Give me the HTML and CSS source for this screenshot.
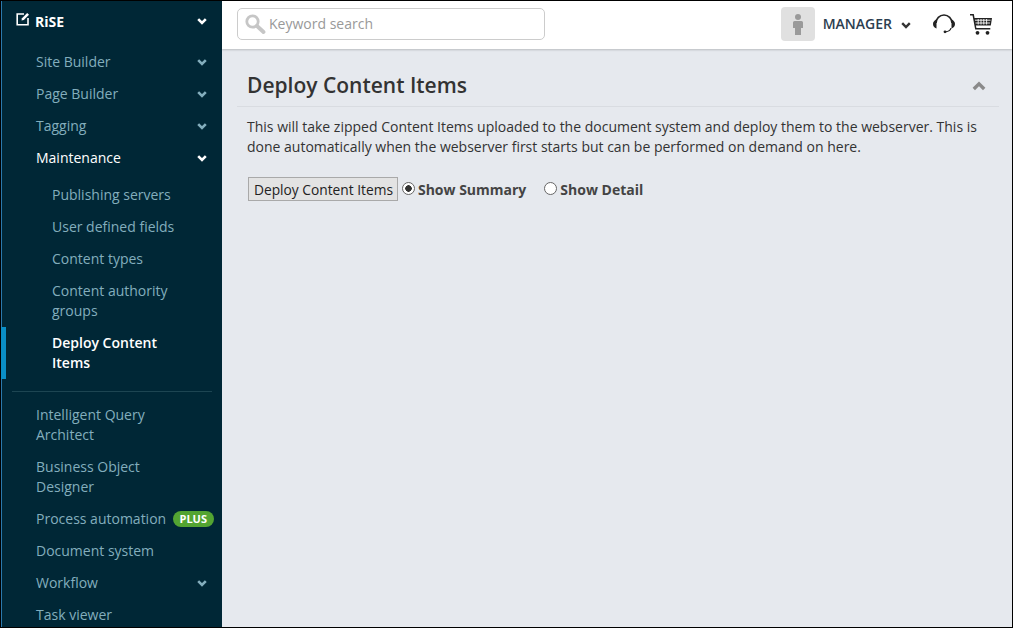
FILE: index.html
```html
<!DOCTYPE html>
<html lang="en">
<head>
<meta charset="UTF-8">
<meta name="viewport" content="width=device-width, initial-scale=1.0">
<title>Deploy Content Items</title>
<link rel="stylesheet" href="styles.css">
</head>

<body>

<div class="frame">

<!-- Sidebar -->
<nav class="sidebar">
<div class="brand">
<svg class="brand-icon" width="14" height="14" viewBox="0 0 14 14"><path d="M8 2H1.2v10.800H12V6" fill="none" stroke="#fff" stroke-width="1.6"/><path d="M5.500 8.500 6 6.200 11.200 1l1.800 1.800L7.800 8z" fill="#fff"/></svg>
<span class="brand-name">RiSE</span>
<svg class="chev chev-white" viewBox="0 0 10 7"><path d="M1.200 1.200 5 5l3.800-3.800" /></svg>
</div>

<a class="item">Site Builder<svg class="chev" viewBox="0 0 10 7"><path d="M1.200 1.200 5 5l3.800-3.800" /></svg></a>
<a class="item">Page Builder<svg class="chev" viewBox="0 0 10 7"><path d="M1.200 1.200 5 5l3.800-3.800" /></svg></a>
<a class="item">Tagging<svg class="chev" viewBox="0 0 10 7"><path d="M1.200 1.200 5 5l3.800-3.800" /></svg></a>
<a class="item open">Maintenance<svg class="chev chev-white" viewBox="0 0 10 7"><path d="M1.200 1.200 5 5l3.800-3.800" /></svg></a>

<div class="submenu">
<a class="item sub">Publishing servers</a>
<a class="item sub">User defined fields</a>
<a class="item sub">Content types</a>
<a class="item sub">Content authority groups</a>
<a class="item sub active">Deploy Content Items</a>
</div>

<div class="divider"></div>

<a class="item wrap">Intelligent Query Architect</a>
<a class="item wrap">Business Object Designer</a>
<a class="item">Process automation<span class="badge">PLUS</span></a>
<a class="item">Document system</a>
<a class="item">Workflow<svg class="chev" viewBox="0 0 10 7"><path d="M1.200 1.200 5 5l3.800-3.800" /></svg></a>
<a class="item">Task viewer</a>
</nav>

<div class="page">

<!-- Top bar -->
<header class="topbar">
<div class="search">
<svg width="21" height="20" viewBox="0 0 21 20"><circle cx="7.500" cy="7.500" r="5.700" fill="none" stroke="#c6c6c6" stroke-width="2.800"/><path d="M12 12l6.500 6" stroke="#c6c6c6" stroke-width="3.800" stroke-linecap="round"/></svg>
<input type="text" placeholder="Keyword search">
</div>
<div class="avatar">
<svg width="10" height="21" viewBox="0 0 10 21"><circle cx="5" cy="3" r="3" fill="#9a9a9a"/><path d="M1.500 7h7q1.500 0 1.500 1.500V14H8v7H2v-7H0V8.500Q0 7 1.500 7z" fill="#9a9a9a"/></svg>
</div>
<span class="user">MANAGER</span>
<svg class="user-chev" viewBox="0 0 10 7"><path d="M1.200 1.200 5 5l3.800-3.800" /></svg>
<svg class="headset" width="24" height="20" viewBox="0 0 24 20"><path d="M4 9a8 8 0 0 1 16 0" fill="none" stroke="#222" stroke-width="1.600"/><path d="M4.500 5.500C2.200 6.500 1 8 1 10s1.200 3.500 3.500 4.500zM19.500 5.500c2.300 1 3.500 2.500 3.500 4.500s-1.200 3.500-3.500 4.500z" fill="#222"/><path d="M19 14c-.5 2.500-3 3.600-5.500 3.800" fill="none" stroke="#222" stroke-width="1.200"/><circle cx="13" cy="17.800" r="1.400" fill="#222"/></svg>
<svg class="cart" width="22" height="21" viewBox="0 0 22 21"><path d="M0 .8h3.200l2.600 14h14.500" fill="none" stroke="#222" stroke-width="1.500"/><path d="M3.800 4H22l-1.200 7.500H5.200z" fill="#222"/><path d="M5 6.200h15.500M5.500 9h14.500M8.200 5v5.500M11 5v5.500M13.800 5v5.500M16.600 5v5.500" stroke="#fff" stroke-width=".9"/><circle cx="7.500" cy="18.800" r="1.900" fill="#222"/><circle cx="17.500" cy="18.800" r="1.900" fill="#222"/></svg>
</header>

<!-- Deploy panel -->
<main class="content">
<div class="panel-head">
<h1>Deploy Content Items</h1>
<svg class="collapse" viewBox="0 0 14 10"><path d="M1.800 8 7 2.800 12.200 8"/></svg>
</div>
<div class="panel-body">
<p>This will take zipped Content Items uploaded to the document system and deploy them to the webserver. This is done automatically when the webserver first starts but can be performed on demand on here.</p>
<div class="actions">
<button type="button">Deploy Content Items</button>
<label class="radio first"><input type="radio" name="mode" checked>Show Summary</label>
<label class="radio"><input type="radio" name="mode">Show Detail</label>
</div>
</div>
</main>

</div>
</div>

</body>
</html>
```

FILE: styles.css
```css
*{
    box-sizing:border-box;
}

html, body{
    height:100%;
}

body{
    margin:0;
    font-family:"Open Sans", sans-serif;
    font-size:14px;
    color:#333;
    overflow:hidden;
}

.frame{
    display:flex;
    height:100%;
    border:1px solid #000;
    overflow:hidden;
}

/* sidebar */
.sidebar{
    width:221px;
    flex:none;
    background:#002736;
    box-shadow:inset 1px 0 0 #2b79ad;
    overflow:hidden;
}

.brand{
    display:flex;
    align-items:center;
    height:45px;
    padding:0 15px 5px 15px;
    color:#fff;
    font-weight:700;
    font-size:14px;
}

.brand-icon{
    margin:-4px 5px 0 0;
}

.brand-name{
    flex:1;
}

.item{
    display:flex;
    align-items:center;
    justify-content:space-between;
    padding:6px 15px 6px 35px;
    line-height:20px;
    font-size:14px;
    color:#83aebd;
}

.item.open{
    color:#fff;
}

.wrap{
    padding-right:60px;
}

.submenu{
    margin-top:5px;
}

.sub{
    padding-left:51px;
    padding-right:40px;
}

.sub.active{
    color:#fff;
    font-weight:600;
    box-shadow:inset 5px 0 0 #0a8fc7;
}

.divider{
    height:1px;
    margin:12px 10px 7px 11px;
    background:#1d4552;
}

.chev{
    width:10px;
    height:7px;
    flex:none;
    fill:none;
    stroke:#83aebd;
    stroke-width:2.600;
}

.chev-white{
    stroke:#fff;
}

.badge{
    flex:none;
    margin-right:-7px;
    padding:0 7px;
    line-height:16px;
    height:16px;
    border-radius:8px;
    background:#53a432;
    color:#fff;
    font-size:11px;
    font-weight:700;
}

/* top bar */
.page{
    flex:1;
    display:flex;
    flex-direction:column;
    min-width:0;
    background:#e6e9ee;
}

.topbar{
    display:flex;
    align-items:center;
    height:48px;
    flex:none;
    padding:0 20px 2px 15px;
    background:#fff;
    box-shadow:0 1px 2px rgba(0,0,0,0.2);
}

.search{
    display:flex;
    align-items:center;
    width:308px;
    height:32px;
    padding-left:7px;
    border:1px solid #ccc;
    border-radius:5px;
    margin-right:auto;
}

.search input{
    flex:1;
    min-width:0;
    margin-bottom:2px;
    border:none;
    outline:none;
    padding:0 0 0 3px;
    font-family:inherit;
    font-size:14px;
}

.search input::placeholder{
    color:#999;
}

.avatar{
    display:flex;
    align-items:center;
    justify-content:center;
    width:34px;
    height:34px;
    border-radius:4px;
    background:#e0e0e0;
}

.user{
    margin:0 0 2px 8px;
    font-size:14px;
    font-weight:600;
    color:#2c3e50;
}

.user-chev{
    width:10px;
    height:7px;
    margin:2px 0 0 9px;
    fill:none;
    stroke:#333;
    stroke-width:2.400;
}

.headset{
    margin-left:21px;
}

.cart{
    margin-left:14px;
}

/* panel */
.content{
    padding:21px 13px 0 15px;
}

.panel-head{
    display:flex;
    align-items:center;
    justify-content:space-between;
    height:37px;
    padding:0 13px 6px 10px;
    border-bottom:1px solid #d9dce1;
}

h1{
    margin:0;
    font-size:21px;
    line-height:30px;
    font-weight:600;
    color:#333;
}

.collapse{
    width:14px;
    height:10px;
    margin-top:2px;
    fill:none;
    stroke:#8a8a8a;
    stroke-width:3.400;
}

.panel-body{
    padding:10px 10px 0 10px;
}

.panel-body p{
    margin:0;
    line-height:20px;
    font-size:14px;
}

.actions{
    display:flex;
    align-items:center;
    margin-top:20px;
    padding-left:1px;
}

button{
    height:24px;
    padding:0 4px 0 5px;
    border:1px solid #a9a9a9;
    background:#e3e3e3;
    color:#222;
    font-family:inherit;
    font-size:13.750px;
}

.radio{
    display:flex;
    align-items:center;
    font-size:14px;
    font-weight:700;
    color:#444;
    margin-left:18px;
}

.radio.first{
    margin-left:4px;
}

.radio input{
    appearance:none;
    width:13px;
    height:13px;
    margin:-1px 3px 0 0;
    border:1px solid #666;
    border-radius:50%;
    background:#fff;
}

.radio input:checked{
    background:radial-gradient(circle,#333 0,#333 3px,#fff 3.500px);
}
```
